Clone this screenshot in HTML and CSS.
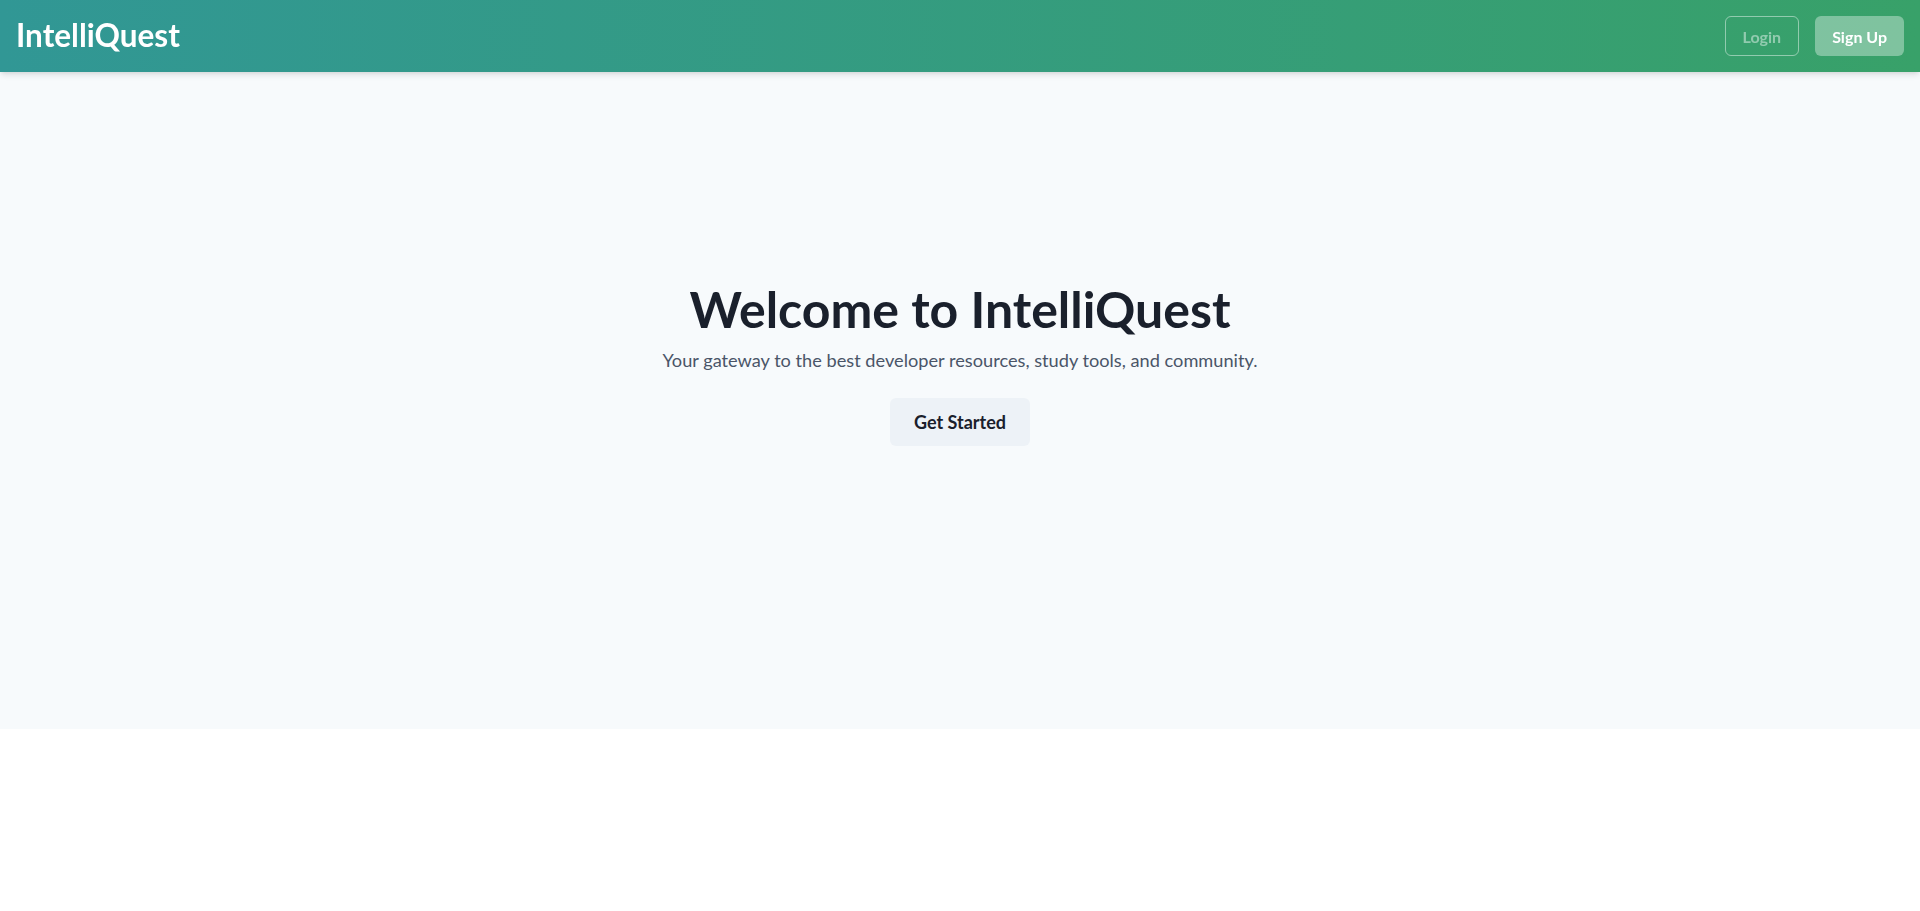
FILE: index.html
```html
<!DOCTYPE html>
<html lang="en">
<head>
<meta charset="utf-8">
<title>IntelliQuest</title>
<link rel="stylesheet" href="styles.css">
</head>
<body>
<header class="topbar">
  <div class="logo">IntelliQuest</div>
  <nav class="actions">
    <button class="btn btn-outline">Login</button>
    <button class="btn btn-solid">Sign Up</button>
  </nav>
</header>
<main>
  <section class="hero">
    <h1 class="hero-title">Welcome to IntelliQuest</h1>
    <p class="hero-sub">Your gateway to the best developer resources, study tools, and community.</p>
    <button class="btn-cta">Get Started</button>
  </section>
</main>
</body>
</html>
```

FILE: styles.css
```css
* { box-sizing: border-box; }
html, body { margin: 0; padding: 0; }
body {
  font-family: "Lato", "Noto Sans", sans-serif;
  background: #ffffff;
  color: #1A202C;
}
.topbar {
  position: fixed;
  top: 0; left: 0; right: 0;
  height: 72px;
  padding: 0 16px;
  display: flex;
  align-items: center;
  justify-content: space-between;
  background: linear-gradient(to right, #319795, #38A169);
  box-shadow: 0 4px 6px -1px rgba(0,0,0,0.1), 0 2px 4px -1px rgba(0,0,0,0.06);
  z-index: 10;
}
.logo {
  color: #ffffff;
  font-size: 31.5px;
  font-weight: 700;
  line-height: 1;
}
.actions {
  display: flex;
  gap: 16px;
}
.btn {
  height: 40px;
  padding: 0 17px;
  border-radius: 6px;
  font-family: inherit;
  font-size: 16px;
  font-weight: 700;
  cursor: pointer;
}
.btn-outline {
  background: transparent;
  color: rgba(255,255,255,0.45);
  border: 1px solid rgba(255,255,255,0.45);
}
.btn-solid {
  background: rgba(255,255,255,0.36);
  color: #ffffff;
  border: none;
}
.hero {
  height: 80vh;
  background: #F7FAFC;
  display: flex;
  flex-direction: column;
  align-items: center;
  justify-content: center;
  text-align: center;
}
.hero-title {
  margin: 0 0 12px;
  font-size: 50px;
  line-height: 52px;
  font-weight: 700;
  color: #1A202C;
}
.hero-sub {
  margin: 0;
  font-size: 18.2px;
  line-height: 27px;
  color: #4A5568;
}
.btn-cta {
  margin-top: 24px;
  height: 48px;
  padding: 0 24px;
  border: none;
  border-radius: 6px;
  background: #EDF2F7;
  color: #1A202C;
  font-family: inherit;
  font-size: 18px;
  font-weight: 700;
  cursor: pointer;
}
```
